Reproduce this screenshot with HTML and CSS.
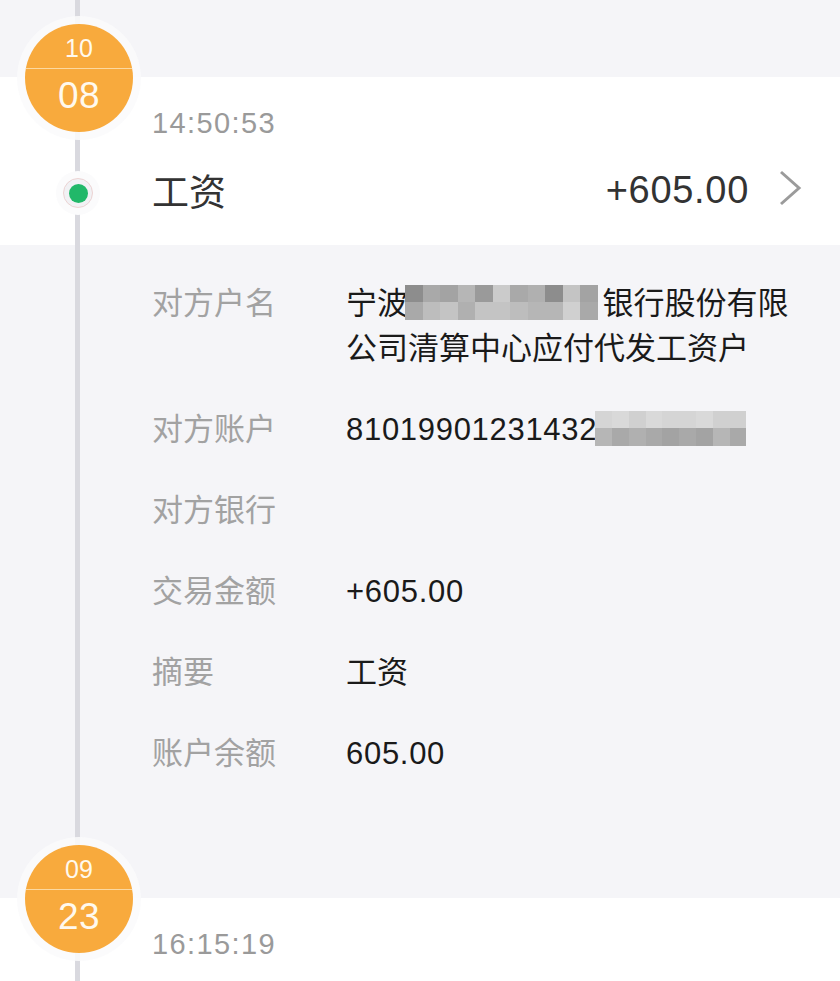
FILE: index.html
```html
<!DOCTYPE html>
<html lang="zh-CN">
<head>
<meta charset="utf-8">
<title>交易明细</title>
<link rel="stylesheet" href="styles.css">
</head>
<body>
<div class="page">
  <div class="rail"></div>

  <section class="day">
    <div class="spacer"></div>
    <div class="band">
      <div class="date"><span class="month">10</span><span class="dd">08</span></div>
      <div class="gutter"><span class="dot"><span class="dot-core"></span></span></div>
      <div class="main">
        <div class="time">14:50:53</div>
        <div class="title-row">
          <span class="title">工资</span>
          <span class="amount">+605.00</span>
          <svg class="chev" width="24" height="36" viewBox="0 0 24 36"><polyline points="3,2 21,18 3,34" fill="none" stroke="#9b9b9b" stroke-width="3"/></svg>
        </div>
      </div>
    </div>
    <div class="details">
      <div class="label">对方户名</div>
      <div class="value">宁波<span class="mosaic m11"><i class="a"></i><i class="d"></i><i class="c"></i><i class="f"></i><i class="b"></i><i class="i"></i><i class="d"></i><i class="e"></i><i class="a"></i><i class="h"></i><i class="c"></i><i class="d"></i><i class="g"></i><i class="h"></i><i class="e"></i><i class="h"></i><i class="h"></i><i class="g"></i><i class="f"></i><i class="f"></i><i class="j"></i><i class="d"></i></span>银行股份有限<br>公司清算中心应付代发工资户</div>

      <div class="label">对方账户</div>
      <div class="value num">81019901231432<span class="mosaic m9"><i class="k"></i><i class="l"></i><i class="j"></i><i class="l"></i><i class="k"></i><i class="k"></i><i class="l"></i><i class="j"></i><i class="j"></i><i class="f"></i><i class="d"></i><i class="e"></i><i class="d"></i><i class="c"></i><i class="d"></i><i class="c"></i><i class="f"></i><i class="d"></i></span></div>

      <div class="label">对方银行</div>
      <div class="value"></div>

      <div class="label">交易金额</div>
      <div class="value num">+605.00</div>

      <div class="label">摘要</div>
      <div class="value">工资</div>

      <div class="label">账户余额</div>
      <div class="value num">605.00</div>
    </div>
  </section>

  <section class="day">
    <div class="band last">
      <div class="date"><span class="month">09</span><span class="dd">23</span></div>
      <div class="gutter"></div>
      <div class="main">
        <div class="time">16:15:19</div>
      </div>
    </div>
  </section>
</div>
</body>
</html>
```

FILE: styles.css
```css
html, body {
  margin: 0;
  padding: 0;
  background: #f5f5f8;
}
body {
  font-family: "Liberation Sans", "Noto Sans CJK SC", sans-serif;
  overflow: hidden;
}
.page {
  position: relative;
  width: 840px;
  height: 981px;
  overflow: hidden;
}
.rail {
  position: absolute;
  left: 75px;
  top: 0;
  bottom: 0;
  width: 5px;
  background: #d9d9df;
  z-index: 1;
}
.spacer {
  height: 77px;
}
.band {
  position: relative;
  background: #ffffff;
  display: flex;
  height: 168px;
  box-sizing: border-box;
}
.band.last {
  height: 200px;
}
.date {
  position: absolute;
  left: 25px;
  top: -53px;
  width: 108px;
  height: 108px;
  border-radius: 50%;
  background: #f8aa3d;
  box-shadow: 0 0 0 8px rgba(250, 250, 252, 0.85);
  z-index: 2;
  display: flex;
  flex-direction: column;
  align-items: center;
  color: #fff9ee;
  overflow: hidden;
}
.month {
  display: block;
  width: 100%;
  height: 44px;
  line-height: 48px;
  text-align: center;
  font-size: 25px;
  border-bottom: 1.5px solid #fcd9a0;
}
.dd {
  display: block;
  line-height: 54px;
  font-size: 37px;
  letter-spacing: 0.5px;
}
.gutter {
  width: 152px;
  flex: none;
  padding-top: 94px;
  box-sizing: border-box;
}
.dot {
  position: relative;
  z-index: 2;
  margin-left: 56px;
  width: 44px;
  height: 44px;
  border-radius: 50%;
  background: #fbfbfc;
  display: flex;
  align-items: center;
  justify-content: center;
}
.dot::before {
  content: "";
  position: absolute;
  left: 7px;
  top: 7px;
  width: 28px;
  height: 28px;
  border-radius: 50%;
  border: 1px solid #ecd3d3;
  background: #f1f1f4;
}
.dot-core {
  position: relative;
  width: 19px;
  height: 19px;
  border-radius: 50%;
  background: #21b869;
}
.main {
  flex: 1;
  padding: 28px 38px 0 0;
  display: flex;
  flex-direction: column;
}
.time {
  font-size: 29px;
  line-height: 36px;
  color: #9a9a9a;
  letter-spacing: 1.4px;
}
.title-row {
  margin-top: 24px;
  height: 50px;
  display: flex;
  align-items: center;
}
.title {
  flex: 1;
  font-size: 37px;
  color: #333333;
}
.amount {
  font-size: 38px;
  color: #333333;
  letter-spacing: 0.7px;
}
.chev {
  margin-left: 29px;
  margin-top: -4px;
}
.details {
  display: grid;
  grid-template-columns: 194px 1fr;
  grid-auto-rows: auto;
  row-gap: 36px;
  padding: 36px 0 122px 152px;
  font-size: 31px;
  line-height: 45px;
}
.label {
  color: #a2a2a2;
}
.value {
  color: #1a1a1a;
}
.value.num {
  letter-spacing: 0.7px;
}
.mosaic {
  display: inline-grid;
  vertical-align: middle;
  height: 35px;
  margin-top: -6px;
  grid-template-rows: 17px 18px;
}
.mosaic.m11 {
  grid-template-columns: repeat(11, 17.5px);
  margin-left: -3px;
  margin-right: 5px;
}
.mosaic.m9 {
  grid-template-columns: repeat(9, 16.8px);
  margin-left: -2px;
}
.mosaic i { display: block; }
.mosaic .a { background: #8d8d8d; }
.mosaic .b { background: #9a9a9a; }
.mosaic .c { background: #a3a3a3; }
.mosaic .d { background: #a9a9a9; }
.mosaic .e { background: #b0b0b0; }
.mosaic .f { background: #b6b6b6; }
.mosaic .g { background: #bdbdbd; }
.mosaic .h { background: #c4c4c4; }
.mosaic .i { background: #cbcbcb; }
.mosaic .j { background: #d0d0d0; }
.mosaic .k { background: #d5d5d5; }
.mosaic .l { background: #d9d9d9; }
```
